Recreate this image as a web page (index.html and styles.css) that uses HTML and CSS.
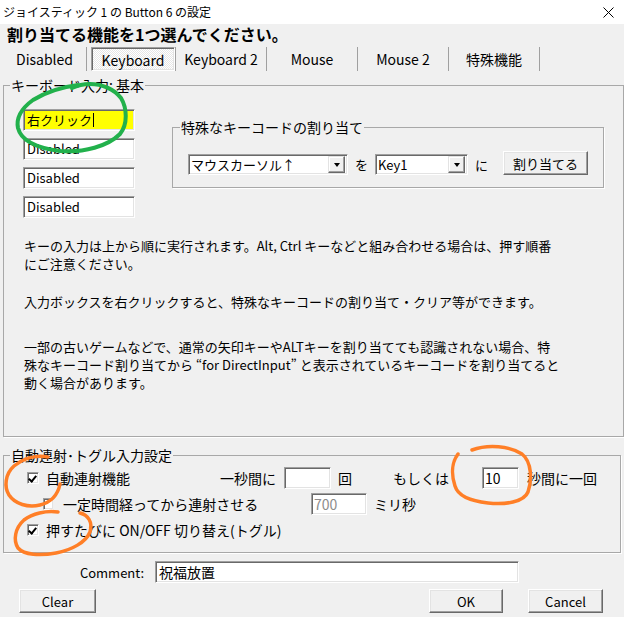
FILE: index.html
```html
<!DOCTYPE html>
<html lang="ja">
<head>
  <meta charset="UTF-8" />
  <title>ジョイスティック 1 の Button 6 の設定</title>
  <link rel="stylesheet" href="styles.css">
</head>
<body>

  <!-- Title bar -->
  <div class="titlebar">
    <span class="title">ジョイスティック 1 の Button 6 の設定</span>
    <svg class="close" width="11" height="11" viewBox="0 0 11 11">
      <path d="M0.5 0.5 L10.5 10.5 M10.5 0.5 L0.5 10.5" stroke="#000" stroke-width="1" fill="none" />
    </svg>
  </div>

  <div class="dialog">
    <h1>割り当てる機能を1つ選んでください。</h1>

    <!-- Function tabs -->
    <div class="tabs">
      <div class="tab first">Disabled</div>
      <div class="tab second"><div class="tab-pressed">Keyboard</div></div>
      <div class="tab">Keyboard 2</div>
      <div class="tab">Mouse</div>
      <div class="tab">Mouse 2</div>
      <div class="tab">特殊機能</div>
    </div>

    <!-- Keyboard: basic -->
    <fieldset class="group basic">
      <legend>キーボード入力: 基本</legend>
      <div class="keys-row">
        <div class="keys">
          <div class="edit hilite">右クリック<span class="caret"></span></div>
          <div class="edit">Disabled</div>
          <div class="edit">Disabled</div>
          <div class="edit">Disabled</div>
        </div>

        <fieldset class="group special">
          <legend>特殊なキーコードの割り当て</legend>
          <div class="special-row">
            <div class="combo combo-key">
              <span>マウスカーソル↑</span>
              <div class="drop"><i></i></div>
            </div>
            <span class="joint">を</span>
            <div class="combo combo-slot">
              <span>Key1</span>
              <div class="drop"><i></i></div>
            </div>
            <span class="joint">に</span>
            <button class="btn assign">割り当てる</button>
          </div>
        </fieldset>
      </div>

      <div class="notes">
        <p class="note-order">キーの入力は上から順に実行されます。Alt, Ctrl キーなどと組み合わせる場合は、押す順番<br>にご注意ください。</p>
        <p class="note-menu">入力ボックスを右クリックすると、特殊なキーコードの割り当て・クリア等ができます。</p>
        <p>一部の古いゲームなどで、通常の矢印キーやALTキーを割り当てても認識されない場合、特<br>殊なキーコード割り当てから “for DirectInput” と表示されているキーコードを割り当てると<br>動く場合があります。</p>
      </div>
    </fieldset>

    <!-- Rapid fire / toggle -->
    <fieldset class="group rapid">
      <legend>自動連射･トグル入力設定</legend>

      <div class="opt-row">
        <span class="check on"></span>
        <span class="lbl lbl-rapid">自動連射機能</span>
        <span class="lbl lbl-persec">一秒間に</span>
        <div class="edit small count"></div>
        <span class="lbl lbl-times">回</span>
        <span class="lbl lbl-or">もしくは</span>
        <div class="edit small secs">10</div>
        <span class="lbl lbl-secs">秒間に一回</span>
      </div>

      <div class="opt-row">
        <span class="check cut"></span>
        <span class="lbl lbl-delay">一定時間経ってから連射させる</span>
        <div class="edit small delay off">700</div>
        <span class="lbl lbl-ms">ミリ秒</span>
      </div>

      <div class="opt-row">
        <span class="check on"></span>
        <span class="lbl lbl-toggle">押すたびに ON/OFF 切り替え(トグル)</span>
      </div>
    </fieldset>

    <!-- Comment -->
    <div class="comment-row">
      <span class="comment-lbl">Comment:</span>
      <div class="edit comment">祝福放置</div>
    </div>

    <!-- Bottom buttons -->
    <div class="button-row">
      <button class="btn clear">Clear</button>
      <button class="btn ok">OK</button>
      <button class="btn cancel">Cancel</button>
    </div>
  </div>

  <!-- Hand-drawn marks on top of the screenshot -->
  <svg class="marks" width="624" height="617" viewBox="0 0 624 617">
    <path class="green" d="M78 85 C62 87 46 92 33 100 C22 108 16 118 18 128 C21 140 36 148 60 151 C84 153 108 146 120 134 C128 124 127 108 121 98 C114 89 102 84 90 84 C82 84 76 86 72 88" />
    <path class="orange" d="M48 457 C36 455 24 458 14 466 C5 474 4 487 9 495 C15 504 28 508 40 505 C52 502 58 494 60 484" />
    <path class="orange" d="M472 450 C488 444 510 446 522 454 C532 462 532 480 528 492 C524 502 505 505 488 503 C470 501 458 496 455 486 C451 474 452 462 458 454" />
    <path class="orange" d="M58 512 C46 510 32 514 24 520 C15 528 13 540 18 548 C24 555 40 556 56 553 C72 550 86 542 90 532 C93 522 88 515 80 513" />
  </svg>

</body>
</html>
```

FILE: styles.css
```css
/* Basic reset */
* {
  margin: 0;
  padding: 0;
  box-sizing: border-box;
}

body {
  width: 624px;
  height: 617px;
  background: #f0f0f0;
  font-family: "Noto Sans CJK JP", sans-serif;
  font-size: 13px;
  color: #000;
  position: relative;
  overflow: hidden;
}

/* Title bar */
.titlebar {
  height: 24px;
  background: #fff;
  display: flex;
  align-items: center;
  justify-content: space-between;
  padding: 0 10px 0 3px;
}

.title {
  font-size: 12px;
  line-height: 16px;
}

.dialog {
  padding: 0 3px 0 3px;
}

h1 {
  font-size: 16px;
  font-weight: bold;
  line-height: 20px;
  margin-left: 4px;
}

/* Tabs */
.tabs {
  display: flex;
  height: 24px;
  margin-top: 3px;
}

.tab {
  width: 91px;
  display: flex;
  align-items: center;
  justify-content: center;
  font-size: 14px;
  border-right: 1px solid #a0a0a0;
}

.tab.first {
  width: 84px;
}

.tab.second {
  width: 89px;
  padding-left: 4px;
}

.tab-pressed {
  width: 100%;
  height: 100%;
  display: flex;
  align-items: center;
  justify-content: center;
  border: 1px solid;
  border-color: #a0a0a0 #fff #fff #a0a0a0;
  box-shadow: inset 1px 1px 0 #696969, inset -1px -1px 0 #e3e3e3;
  background: repeating-conic-gradient(#fff 0 25%, #e6e6e6 0 50%) 0 0 / 2px 2px;
  padding-top: 2px;
}

/* Group boxes */
.group {
  border: 1px solid #a8a8a8;
  box-shadow: 1px 1px 0 #fff;
}

.group legend {
  font-size: 14px;
  line-height: 16px;
  padding: 0 1px;
}

.basic {
  height: 360px;
  margin-top: 6px;
  padding: 16px 19px 0 19px;
}

.basic > legend {
  margin-left: -13px;
}

.keys-row {
  display: flex;
  align-items: flex-start;
}

.keys {
  display: flex;
  flex-direction: column;
  gap: 7px;
}

/* Sunken edit box */
.edit {
  width: 112px;
  height: 22px;
  background: #fff;
  border: 1px solid;
  border-color: #a0a0a0 #fff #fff #a0a0a0;
  box-shadow: inset 1px 1px 0 #696969, inset -1px -1px 0 #e3e3e3;
  padding: 0 3px;
  line-height: 20px;
  white-space: nowrap;
  display: flex;
  align-items: center;
}

.edit.hilite {
  background: #ffff00;
}

.caret {
  width: 1px;
  height: 14px;
  background: #000;
  margin-left: 1px;
}

.special {
  width: 428px;
  height: 69px;
  margin: 10px 0 0 37px;
  padding: 16px 15px 0 15px;
}

.special > legend {
  margin-left: -8px;
}

.special-row {
  display: flex;
  align-items: center;
  height: 24px;
}

.combo {
  height: 21px;
  background: #fff;
  border: 1px solid;
  border-color: #a0a0a0 #fff #fff #a0a0a0;
  box-shadow: inset 1px 1px 0 #696969, inset -1px -1px 0 #e3e3e3;
  display: flex;
  align-items: center;
  justify-content: space-between;
  padding: 0 2px 0 2px;
  margin-top: 3px;
}

.combo span {
  line-height: 17px;
}

.combo-key {
  width: 160px;
}

.combo-slot {
  width: 93px;
}

.drop {
  width: 17px;
  height: 17px;
  background: #f0f0f0;
  border: 1px solid;
  border-color: #e3e3e3 #696969 #696969 #e3e3e3;
  box-shadow: inset -1px -1px 0 #a0a0a0, inset 1px 1px 0 #fff;
  display: flex;
  align-items: center;
  justify-content: center;
}

.drop i {
  width: 0;
  height: 0;
  border-left: 3.5px solid transparent;
  border-right: 3.5px solid transparent;
  border-top: 4px solid #000;
}

.joint {
  margin: 3px 7px 0 7px;
}

/* Raised button */
.btn {
  font-family: "Noto Sans CJK JP", sans-serif;
  font-size: 13px;
  height: 24px;
  background: #f0f0f0;
  color: #000;
  border: 1px solid;
  border-color: #fff #696969 #696969 #fff;
  box-shadow: inset -1px -1px 0 #a0a0a0, inset 1px 1px 0 #e3e3e3;
}

.assign {
  width: 85px;
  margin-left: 8px;
}

/* Notes */
.notes {
  margin-top: 19px;
  margin-left: 1px;
  line-height: 18px;
}

.notes p {
  white-space: nowrap;
}

.note-order {
  margin-bottom: 20px;
}

.note-menu {
  margin-bottom: 27px;
}

/* Rapid fire group */
.rapid {
  height: 106px;
  margin-top: 10px;
  padding: 4px 0 0 23px;
}

.rapid > legend {
  margin-left: -17px;
}

.opt-row {
  display: flex;
  align-items: center;
  height: 22px;
  margin-bottom: 4px;
  font-size: 14px;
  white-space: nowrap;
}

.check {
  width: 12px;
  height: 12px;
  background: #fff;
  border: 1px solid;
  border-color: #a0a0a0 #fff #fff #a0a0a0;
  box-shadow: inset 1px 1px 0 #696969, inset -1px -1px 0 #e3e3e3;
  position: relative;
}

.check.on::after {
  content: '';
  position: absolute;
  left: 2px;
  top: 1px;
  width: 3px;
  height: 6px;
  border: solid #000;
  border-width: 0 2px 2px 0;
  transform: rotate(40deg);
}

.check.cut {
  width: 10px;
  margin-left: 16px;
  border-right: none;
}

.lbl {
  display: inline-block;
}

.lbl-rapid {
  width: 174px;
  margin-left: 7px;
}

.lbl-persec {
  width: 64px;
}

.edit.small {
  width: 47px;
  padding: 0 2px;
}

.lbl-times {
  width: 14px;
  margin-left: 7px;
}

.lbl-or {
  width: 89px;
  margin-left: 41px;
}

.edit.secs {
  width: 37px;
}

.lbl-secs {
  margin-left: 8px;
}

.lbl-delay {
  width: 248px;
  margin-left: 10px;
}

.edit.delay {
  width: 56px;
}

.edit.off {
  color: #8c8c8c;
}

.lbl-ms {
  margin-left: 7px;
}

.lbl-toggle {
  margin-left: 7px;
}

/* Comment row */
.comment-row {
  display: flex;
  align-items: center;
  margin-top: 8px;
}

.comment-lbl {
  width: 141px;
  text-align: right;
}

.edit.comment {
  width: 364px;
  margin-left: 11px;
  font-size: 14px;
}

/* Bottom buttons */
.button-row {
  display: flex;
  margin-top: 6px;
  padding-left: 16px;
}

.clear {
  width: 77px;
}

.ok {
  width: 74px;
  margin-left: auto;
}

.cancel {
  width: 75px;
  margin-left: 25px;
  margin-right: 18px;
}

/* Hand-drawn marks */
.marks {
  position: absolute;
  top: 0;
  left: 0;
  pointer-events: none;
}

.marks path {
  fill: none;
  stroke-linecap: round;
  stroke-linejoin: round;
}

.marks .green {
  stroke: #22b14c;
  stroke-width: 4;
}

.marks .orange {
  stroke: #ff7f27;
  stroke-width: 3.5;
}
```
